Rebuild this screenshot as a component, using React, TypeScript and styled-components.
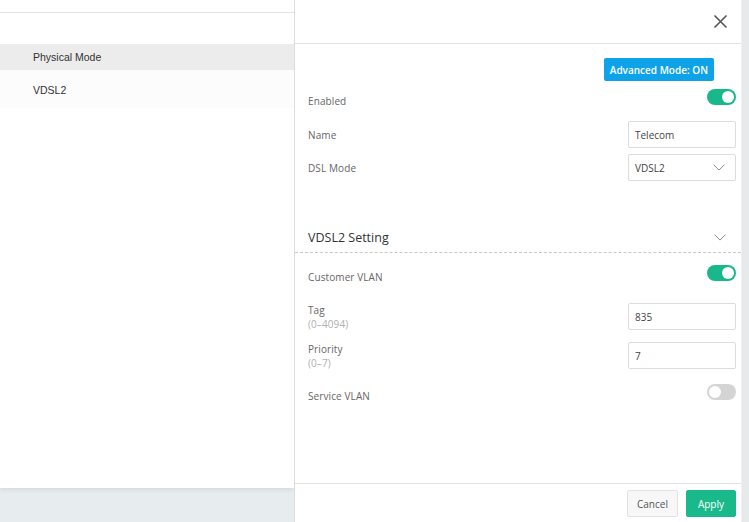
import styled, {createGlobalStyle} from 'styled-components'

const GlobalStyle = createGlobalStyle`
  html, body {
    margin: 0;
    padding: 0;
    background: #e7ecef;
    font-family: "Open Sans", "Liberation Sans", sans-serif;
  }
  * { box-sizing: border-box; }
`

const Screen = styled.div`
  display: flex;
  width: 749px;
  height: 522px;
  overflow: hidden;
`

const Backdrop = styled.div`
  width: 294px;
  flex-shrink: 0;
  background: #e7ecef;
`

const Card = styled.div`
  height: 488px;
  background: #fff;
  box-shadow: 0 2px 4px rgba(120, 140, 150, 0.18);
  padding-top: 12px;
`

const CardTop = styled.div`
  border-top: 1px solid #e3e3e3;
  padding-top: 31px;
`

const TableRow = styled.div<{$head?: boolean}>`
  display: flex;
  align-items: center;
  height: ${p => (p.$head ? 26 : 38)}px;
  padding-left: 33px;
  padding-bottom: ${p => (p.$head ? 0 : 0)}px;
  padding-top: ${p => (p.$head ? 0 : 2)}px;
  background: ${p => (p.$head ? '#ececec' : '#fcfcfc')};
  font-family: "Liberation Sans", Arial, sans-serif;
  font-size: 10.5px;
  color: #333;
`

const Panel = styled.div`
  width: 447px;
  flex-shrink: 0;
  background: #fff;
  border-left: 1px solid #dcdcdc;
  display: flex;
  flex-direction: column;
`

const PanelHeader = styled.div`
  height: 44px;
  border-bottom: 1px solid #e3e3e3;
  display: flex;
  align-items: center;
  justify-content: flex-end;
  padding-right: 13px;
`

const CloseButton = styled.button`
  border: 0;
  background: none;
  padding: 0;
  width: 15px;
  height: 15px;
  display: flex;
  cursor: pointer;
`

const PanelBody = styled.div`
  flex: 1;
  padding: 14px 5px 0 13px;
  display: flex;
  flex-direction: column;
`

const ModeBar = styled.div`
  display: flex;
  justify-content: flex-end;
  padding-right: 22px;
`

const ModeButton = styled.button`
  height: 23px;
  padding: 0 6px;
  border: 0;
  border-radius: 2px;
  background: #0ea3e9;
  color: #fff;
  font-family: inherit;
  font-size: 10px;
  font-weight: 600;
`

const FieldRow = styled.div<{$h: number; $mt: number}>`
  display: flex;
  align-items: center;
  justify-content: space-between;
  height: ${p => p.$h}px;
  margin-top: ${p => p.$mt}px;
`

const Label = styled.div`
  font-size: 10px;
  color: #666;
  line-height: 14px;
  letter-spacing: 0.1px;
`

const Hint = styled.div`
  color: #b0b0b0;
`

const Toggle = styled.div<{$on?: boolean}>`
  width: 29px;
  height: 16px;
  margin-bottom: 8px;
  border-radius: 8px;
  background: ${p => (p.$on ? '#18b88a' : '#d4d4d4')};
  position: relative;
  &::after {
    content: '';
    position: absolute;
    top: 2px;
    left: ${p => (p.$on ? 15 : 2)}px;
    width: 12px;
    height: 12px;
    border-radius: 50%;
    background: #fff;
  }
`

const Input = styled.div`
  width: 108px;
  height: 27px;
  border: 1px solid #dcdcdc;
  border-radius: 2px;
  display: flex;
  align-items: center;
  justify-content: space-between;
  padding: 0 10px 0 6px;
  font-size: 10px;
  color: #444;
`

const SectionHead = styled.div`
  display: flex;
  align-items: center;
  justify-content: space-between;
  height: 32px;
  margin: 40px -5px 0 -13px;
  padding: 2px 15px 0 13px;
  border-bottom: 1px dashed #c8c8c8;
  font-size: 12.5px;
  color: #333;
`

const PanelFooter = styled.div`
  height: 39px;
  border-top: 1px solid #e3e3e3;
  display: flex;
  align-items: flex-start;
  justify-content: flex-end;
  gap: 8px;
  padding: 6px 5px 0 0;
`

const FooterButton = styled.button<{$primary?: boolean}>`
  height: 27px;
  padding: 0 ${p => (p.$primary ? 11 : 9)}px;
  border-radius: 2px;
  border: 1px solid ${p => (p.$primary ? '#19b98b' : '#e2e2e2')};
  background: ${p => (p.$primary ? '#19b98b' : '#f7f7f7')};
  color: ${p => (p.$primary ? '#fff' : '#555')};
  font-family: inherit;
  font-size: 10px;
`

const ScrollStrip = styled.div`
  flex: 1;
  background: #e6eaed;
  border-left: 1px solid #f0f0f0;
`

function Chevron({size = 12}: {size?: number}) {
  return (
    <svg width={size} height={size * 0.6} viewBox="0 0 12 7" fill="none">
      <path d="M0.5 0.5 L6 6 L11.5 0.5" stroke="#888" strokeWidth="1" />
    </svg>
  )
}

export default function App() {
  return (
    <>
      <GlobalStyle />
      <Screen>
        <Backdrop>
          <Card>
            <CardTop>
              <TableRow $head>Physical Mode</TableRow>
              <TableRow>VDSL2</TableRow>
            </CardTop>
          </Card>
        </Backdrop>
        <Panel>
          <PanelHeader>
            <CloseButton aria-label="close">
              <svg width="15" height="15" viewBox="0 0 15 15">
                <path d="M1.5 1.5 L13.5 13.5 M13.5 1.5 L1.5 13.5" stroke="#555" strokeWidth="1.6" />
              </svg>
            </CloseButton>
          </PanelHeader>
          <PanelBody>
            <ModeBar>
              <ModeButton>Advanced Mode: ON</ModeButton>
            </ModeBar>
            <FieldRow $h={26} $mt={7}>
              <Label>Enabled</Label>
              <Toggle $on />
            </FieldRow>
            <FieldRow $h={27} $mt={7}>
              <Label>Name</Label>
              <Input>Telecom</Input>
            </FieldRow>
            <FieldRow $h={27} $mt={6}>
              <Label>DSL Mode</Label>
              <Input>
                VDSL2
                <Chevron />
              </Input>
            </FieldRow>
            <SectionHead>
              VDSL2 Setting
              <Chevron />
            </SectionHead>
            <FieldRow $h={26} $mt={11}>
              <Label>Customer VLAN</Label>
              <Toggle $on />
            </FieldRow>
            <FieldRow $h={27} $mt={13}>
              <Label>
                Tag
                <Hint>(0–4094)</Hint>
              </Label>
              <Input>835</Input>
            </FieldRow>
            <FieldRow $h={27} $mt={12}>
              <Label>
                Priority
                <Hint>(0–7)</Hint>
              </Label>
              <Input>7</Input>
            </FieldRow>
            <FieldRow $h={26} $mt={14}>
              <Label>Service VLAN</Label>
              <Toggle />
            </FieldRow>
          </PanelBody>
          <PanelFooter>
            <FooterButton>Cancel</FooterButton>
            <FooterButton $primary>Apply</FooterButton>
          </PanelFooter>
        </Panel>
        <ScrollStrip />
      </Screen>
    </>
  )
}
